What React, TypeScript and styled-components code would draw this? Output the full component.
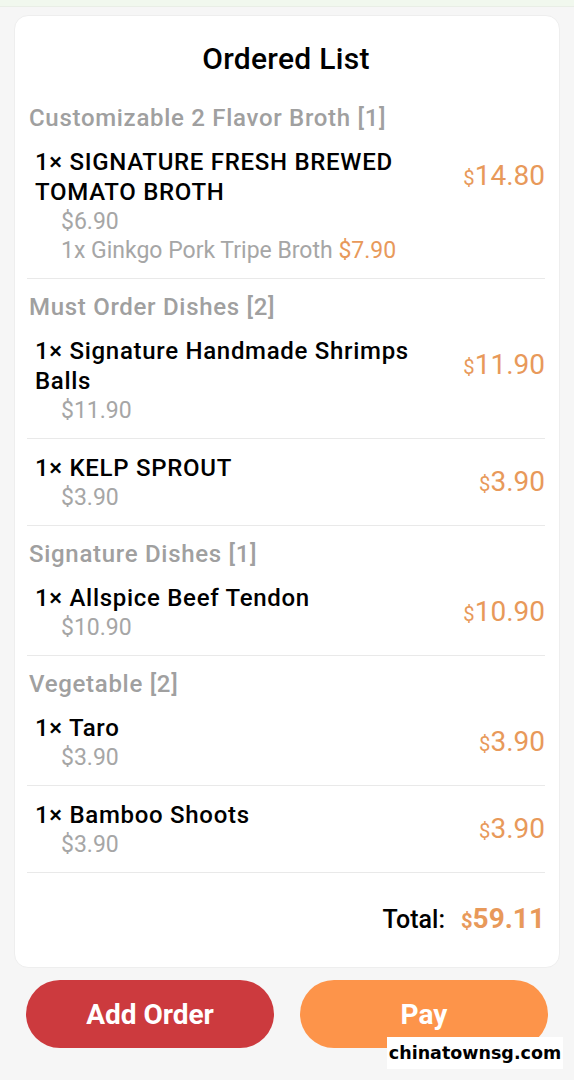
import React from "react";
import styled, { createGlobalStyle } from "styled-components";

type Sub = { label?: string; price: string };
type Item = { name: string; subs: Sub[]; total: string };
type Section = { title: string; items: Item[] };

const sections: Section[] = [
  {
    title: "Customizable 2 Flavor Broth [1]",
    items: [
      {
        name: "1× SIGNATURE FRESH BREWED TOMATO BROTH",
        subs: [{ price: "$6.90" }, { label: "1x Ginkgo Pork Tripe Broth", price: "$7.90" }],
        total: "14.80",
      },
    ],
  },
  {
    title: "Must Order Dishes [2]",
    items: [
      { name: "1× Signature Handmade Shrimps Balls", subs: [{ price: "$11.90" }], total: "11.90" },
      { name: "1× KELP SPROUT", subs: [{ price: "$3.90" }], total: "3.90" },
    ],
  },
  {
    title: "Signature Dishes [1]",
    items: [{ name: "1× Allspice Beef Tendon", subs: [{ price: "$10.90" }], total: "10.90" }],
  },
  {
    title: "Vegetable [2]",
    items: [
      { name: "1× Taro", subs: [{ price: "$3.90" }], total: "3.90" },
      { name: "1× Bamboo Shoots", subs: [{ price: "$3.90" }], total: "3.90" },
    ],
  },
];

const OrderedList = () => {
  return (
    <>
      <GlobalStyle />
      <Page>
        <TopStrip />
        <Card>
          <Title>Ordered List</Title>
          {sections.map((section) => (
            <div key={section.title}>
              <SectionTitle>{section.title}</SectionTitle>
              {section.items.map((item) => (
                <ItemRow key={item.name}>
                  <ItemInfo>
                    <ItemName>{item.name}</ItemName>
                    {item.subs.map((sub, i) => (
                      <SubLine key={i}>
                        {sub.label ? (
                          <>
                            {sub.label} <Accent>{sub.price}</Accent>
                          </>
                        ) : (
                          sub.price
                        )}
                      </SubLine>
                    ))}
                  </ItemInfo>
                  <ItemPrice>
                    <Dollar>$</Dollar>
                    {item.total}
                  </ItemPrice>
                </ItemRow>
              ))}
            </div>
          ))}
          <TotalRow>
            <TotalLabel>Total:</TotalLabel>
            <TotalValue>
              <Dollar>$</Dollar>59.11
            </TotalValue>
          </TotalRow>
        </Card>
        <ButtonBar>
          <ActionButton $color="#cc3a3e">Add Order</ActionButton>
          <ActionButton $color="#fd944a">Pay</ActionButton>
        </ButtonBar>
        <Watermark>chinatownsg.com</Watermark>
      </Page>
    </>
  );
};

const GlobalStyle = createGlobalStyle`
  body {
    margin: 0;
    background: #f6f6f6;
    font-family: Roboto, "Liberation Sans", sans-serif;
  }
`;

const Page = styled.div`
  position: relative;
  width: 574px;
  height: 1080px;
  overflow: hidden;
  background: #f6f6f6;
`;

const TopStrip = styled.div`
  height: 6px;
  background: #f1f8ee;
  border-bottom: 1px solid #e9eee6;
`;

const Card = styled.div`
  margin: 8px 14px 0;
  padding: 26px 14px 0 12px;
  background: #fff;
  border: 1px solid #eeeeee;
  border-radius: 14px;
`;

const Title = styled.h1`
  margin: 0 0 14px;
  text-align: center;
  font-size: 30px;
  line-height: 34px;
  letter-spacing: 0.3px;
  font-weight: 500;
  color: #000;
`;

const SectionTitle = styled.div`
  padding: 13px 0 0 2px;
  font-size: 24px;
  line-height: 30px;
  letter-spacing: 0.7px;
  font-weight: 500;
  color: #a0a0a0;
`;

const ItemRow = styled.div`
  display: flex;
  align-items: flex-start;
  gap: 40px;
  padding: 14px 0 13px 8px;
  border-bottom: 1px solid #e9e9e9;
`;

const ItemInfo = styled.div`
  flex: 1;
  min-width: 0;
`;

const ItemName = styled.div`
  font-size: 24px;
  line-height: 30px;
  letter-spacing: 0.7px;
  font-weight: 500;
  color: #000;
`;

const SubLine = styled.div`
  padding-left: 26px;
  font-size: 23px;
  line-height: 29px;
  color: #a6a6a6;
`;

const Accent = styled.span`
  color: #e8995a;
`;

const ItemPrice = styled.div`
  flex: none;
  width: 84px;
  margin-top: 14px;
  text-align: right;
  font-size: 28px;
  line-height: 30px;
  color: #e8995a;
`;

const Dollar = styled.span`
  font-size: 0.72em;
`;

const TotalRow = styled.div`
  display: flex;
  justify-content: flex-end;
  align-items: baseline;
  gap: 16px;
  padding: 30px 0 30px;
  line-height: 32px;
`;

const TotalLabel = styled.span`
  font-size: 25px;
  font-weight: 500;
  color: #000;
`;

const TotalValue = styled.span`
  font-size: 28px;
  font-weight: 700;
  color: #e8995a;
`;

const ButtonBar = styled.div`
  display: flex;
  gap: 26px;
  padding: 12px 26px 0;
`;

const ActionButton = styled.button<{ $color: string }>`
  flex: 1;
  height: 68px;
  border: none;
  border-radius: 34px;
  background: ${(p) => p.$color};
  color: #fff;
  font-family: Roboto, "Liberation Sans", sans-serif;
  font-size: 28px;
  font-weight: 700;
`;

const Watermark = styled.div`
  position: absolute;
  left: 387px;
  top: 1037px;
  width: 176px;
  height: 32px;
  display: flex;
  align-items: center;
  justify-content: center;
  background: #fff;
  font-family: "DejaVu Sans", sans-serif;
  font-size: 17.5px;
  font-weight: 700;
  color: #000;
`;

export default OrderedList;
